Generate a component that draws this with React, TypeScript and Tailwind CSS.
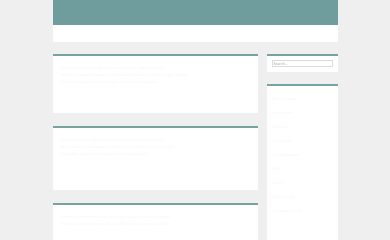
import React from "react";

const posts = [
  { h: "h-[59px]", lines: ["Lorem ipsum dolor sit amet, consectetur adipiscing elit", "Sed do eiusmod tempor incididunt ut labore et dolore magna aliqua", "Ut enim ad minim veniam, quis nostrud exercitation"] },
  { h: "h-[64px]", lines: ["Duis aute irure dolor in reprehenderit in voluptate velit", "Excepteur sint occaecat cupidatat non proident, sunt in culpa", "Qui officia deserunt mollit anim id est laborum"] },
  { h: "h-[60px]", lines: ["Nemo enim ipsam voluptatem quia voluptas sit aspernatur", "Neque porro quisquam est, qui dolorem ipsum quia dolor"] },
];

const sideLinks = ["Recent Posts", "Hello world!", "Archives", "Categories", "Uncategorized", "Meta", "Log in", "Entries feed", "Comments feed"];

export default function App() {
  return (
    <div className="h-[240px] overflow-hidden bg-[#efefef]" style={{ fontFamily: '"Open Sans", sans-serif' }}>
      <div className="mx-auto w-[285px]">
        {/* Header */}
        <div className="h-[25px] bg-[#6f9c9c]"></div>
        <div className="h-[17px] bg-white"></div>

        <div className="flex gap-[9px] pt-[12px]">
          {/* Posts */}
          <div className="flex w-[205px] flex-col gap-[13px]">
            {posts.map((p, i) => (
              <div key={i} className={`${p.h} border-t-2 border-[#78a3a3] bg-white px-[8px] pt-[8px]`}>
                {p.lines.map((l) => (
                  <p key={l} className="text-[4px] leading-[7px] text-[#f7f7f7]">{l}</p>
                ))}
              </div>
            ))}
          </div>

          {/* Sidebar */}
          <div className="flex w-[71px] flex-col gap-[12px]">
            <div className="h-[18px] border-t-2 border-[#78a3a3] bg-white px-[5px] pt-[4px]">
              <div className="flex h-[7px] items-center border border-[#dcdcdc] bg-white px-[1px] text-[3.5px] text-[#9a9a9a]">
                Search...
              </div>
            </div>
            <div className="h-[160px] border-t-2 border-[#78a3a3] bg-white px-[5px] pt-[6px]">
              {sideLinks.map((l) => (
                <p key={l} className="text-[4px] leading-[14px] text-[#f7f7f7]">{l}</p>
              ))}
            </div>
          </div>
        </div>
      </div>
    </div>
  );
}
